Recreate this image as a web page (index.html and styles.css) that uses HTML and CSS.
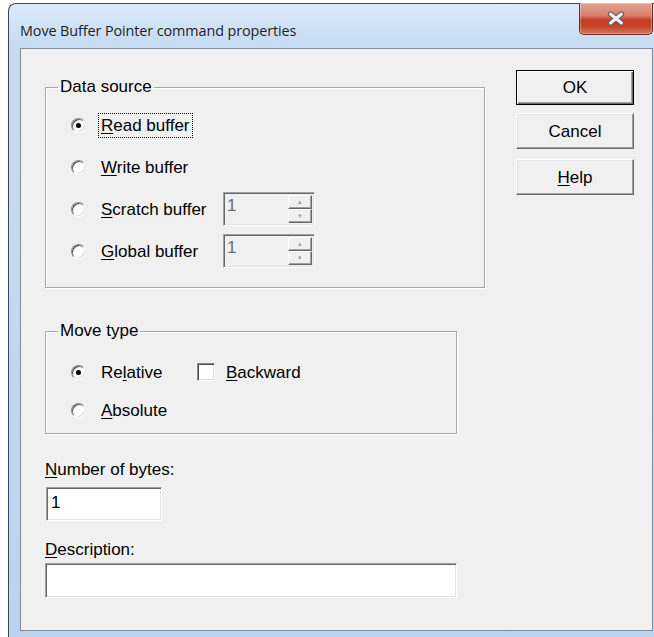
FILE: index.html
```html
<!DOCTYPE html>
<html lang="en">
<head>
<meta charset="utf-8">
<title>Move Buffer Pointer command properties</title>
<link rel="stylesheet" href="styles.css">
</head>
<body>
<div class="window">
  <div class="titlebar">
    <span class="title">Move Buffer Pointer command properties</span>
    <button class="close" type="button" aria-label="Close">
      <svg width="20" height="15" viewBox="0 0 20 15">
        <path d="M4.5 3 L15.5 12 M15.5 3 L4.5 12" stroke="#5a5a5a" stroke-width="5.2" stroke-linecap="round"/>
        <path d="M4.5 3 L15.5 12 M15.5 3 L4.5 12" stroke="#f4f4f4" stroke-width="3" stroke-linecap="round"/>
      </svg>
    </button>
  </div>
  <div class="client">
    <div class="main">
      <fieldset class="group group-source">
        <legend>Data source</legend>
        <div class="row"><span class="radio checked"></span><span class="label focus"><u>R</u>ead buffer</span></div>
        <div class="row"><span class="radio"></span><span class="label"><u>W</u>rite buffer</span></div>
        <div class="row"><span class="radio"></span><span class="label label-fixed"><u>S</u>cratch buffer</span>
          <div class="spin"><span class="spin-value">1</span><span class="spin-btns"><span class="spin-btn">&#9652;</span><span class="spin-btn">&#9662;</span></span></div>
        </div>
        <div class="row"><span class="radio"></span><span class="label label-fixed"><u>G</u>lobal buffer</span>
          <div class="spin"><span class="spin-value">1</span><span class="spin-btns"><span class="spin-btn">&#9652;</span><span class="spin-btn">&#9662;</span></span></div>
        </div>
      </fieldset>

      <fieldset class="group group-move">
        <legend>Move type</legend>
        <div class="row"><span class="radio checked"></span><span class="label label-rel">Re<u>l</u>ative</span><span class="check"></span><span class="label"><u>B</u>ackward</span></div>
        <div class="row"><span class="radio"></span><span class="label"><u>A</u>bsolute</span></div>
      </fieldset>

      <div class="field-label field-bytes"><u>N</u>umber of bytes:</div>
      <div class="edit edit-short">1</div>
      <div class="field-label field-desc"><u>D</u>escription:</div>
      <div class="edit edit-long"></div>
    </div>
    <div class="buttons">
      <button class="btn btn-default" type="button">OK</button>
      <button class="btn" type="button">Cancel</button>
      <button class="btn" type="button"><u>H</u>elp</button>
    </div>
  </div>
</div>
</body>
</html>
```
FILE: styles.css
```css
html, body {
  margin: 0;
  padding: 0;
  overflow: hidden;
  background: #ffffff;
}

body {
  width: 654px;
  height: 637px;
  font-family: "Liberation Sans", Arial, sans-serif;
  font-size: 17px;
  line-height: 19px;
  color: #000;
}

u { text-decoration-thickness: 1px; text-underline-offset: 2px; }

/* window frame */
.window {
  margin: 3px 0 0 8px;
  width: 660px;
  height: 660px;
  box-sizing: border-box;
  border: 1px solid #3c4550;
  border-right: none;
  border-radius: 8px 0 0 0;
  padding: 0 0 0 11px;
  background: linear-gradient(180deg, #dcebfa 0px, #c6dcf3 40px, #b9d3ef 100%);
}

.titlebar {
  display: flex;
  align-items: flex-start;
  height: 44px;
  width: 633px;
}

.title {
  font-family: "Open Sans", "Noto Sans", sans-serif;
  font-size: 14.4px;
  color: #1e1e1e;
  margin-top: 17px;
  letter-spacing: -0.1px;
}

.close {
  margin-left: auto;
  margin-top: -1px;
  width: 74px;
  height: 32px;
  border: 1px solid #6a2a22;
  border-top: none;
  border-radius: 0 0 5px 5px;
  background: linear-gradient(180deg, #e3a394 0%, #d8806b 40%, #c33c22 55%, #c6452b 75%, #d77658 100%);
  box-shadow: inset 0 0 0 1px rgba(255,255,255,0.3);
  display: flex;
  align-items: center;
  justify-content: center;
  padding: 0;
}

/* dialog client area */
.client {
  display: flex;
  width: 633px;
  height: 583px;
  box-sizing: border-box;
  border: 1px solid #7f8c99;
  background: #f0f0f0;
  padding: 21px 0 0 24px;
}

.main {
  width: 440px;
  margin-top: 8px;
}

.group {
  margin: 0;
  padding: 0 0 0 0;
  border: 1px solid #a6a6a6;
  box-shadow: 1px 1px 0 #ffffff, inset 1px 1px 0 #ffffff;
  min-inline-size: 0;
  box-sizing: border-box;
}

.group legend {
  margin-left: 12px;
  padding: 0 2px;
  line-height: 18px;
}

.group-source {
  width: 440px;
  height: 210px;
  padding-top: 8px;
}

.group-move {
  width: 412px;
  height: 112px;
  margin-top: 34px;
  padding-top: 13px;
}

.group-source .row { height: 42px; }
.group-move .row { height: 38px; }

.row {
  display: flex;
  align-items: center;
  padding-left: 25px;
}

/* radio button */
.radio {
  position: relative;
  width: 15px;
  height: 15px;
  box-sizing: border-box;
  border-radius: 50%;
  border: 1px solid;
  border-color: #8a8a8a #f4f4f4 #ffffff #8a8a8a;
  box-shadow: inset 1px 1px 0 #505050, inset -1px -1px 0 #dcdcdc;
  background: #ffffff;
  margin-right: 12px;
  flex: none;
}

.radio.checked::after {
  content: "";
  position: absolute;
  left: 4px;
  top: 4px;
  width: 5px;
  height: 5px;
  border-radius: 50%;
  background: #000;
}

.label { padding: 2px 2px; border: 1px solid transparent; }
.label.focus { border: 1px dotted #000; }
.label-fixed { width: 119px; }
.label-rel { width: 76px; }

/* check box */
.check {
  width: 18px;
  height: 18px;
  box-sizing: border-box;
  border: 1px solid;
  border-color: #8a8a8a #ffffff #ffffff #8a8a8a;
  box-shadow: inset 1px 1px 0 #505050, inset -1px -1px 0 #dcdcdc;
  background: #fff;
  margin-right: 8px;
  margin-left: 17px;
}

/* disabled spin box */
.spin {
  display: flex;
  width: 92px;
  height: 34px;
  box-sizing: border-box;
  border: 1px solid;
  border-color: #a0a0a0 #ffffff #ffffff #a0a0a0;
  box-shadow: inset 1px 1px 0 #696969, inset -1px -1px 0 #e3e3e3;
  background: #f0f0f0;
  padding: 2px 2px 2px 3px;
}

.spin-value {
  flex: 1;
  color: #6d6d6d;
  font-size: 17px;
  line-height: 22px;
}

.spin-btns {
  display: flex;
  flex-direction: column;
  width: 24px;
}

.spin-btn {
  flex: 1;
  box-sizing: border-box;
  border: 1px solid;
  border-color: #ffffff #696969 #696969 #ffffff;
  box-shadow: inset -1px -1px 0 #a0a0a0;
  background: #f0f0f0;
  color: #a0a0a0;
  font-size: 7px;
  line-height: 12px;
  text-align: center;
}

/* edit fields */
.field-label { line-height: 18px; }
.field-bytes { margin-top: 27px; }
.field-desc { margin-top: 20px; }

.edit {
  box-sizing: border-box;
  background: #ffffff;
  border: 1px solid;
  border-color: #a0a0a0 #ffffff #ffffff #a0a0a0;
  box-shadow: inset 1px 1px 0 #696969, inset -1px -1px 0 #e3e3e3;
  padding: 4px 4px 0 4px;
  line-height: 22px;
  font-size: 17px;
}

.edit-short { width: 116px; height: 34px; margin: 8px 0 0 1px; }
.edit-long { width: 412px; height: 35px; margin-top: 4px; }

/* command buttons */
.buttons {
  display: flex;
  flex-direction: column;
  margin-left: 31px;
}

.btn {
  font: inherit;
  width: 118px;
  height: 36px;
  box-sizing: border-box;
  margin-bottom: 10px;
  background: #f0f0f0;
  border: 1px solid;
  border-color: #ffffff #696969 #696969 #ffffff;
  box-shadow: inset -1px -1px 0 #a0a0a0, inset 1px 1px 0 #e3e3e3;
  color: #000;
  padding: 0;
}

.btn-default {
  height: 35px;
  border: 1px solid #000;
  box-shadow: inset 1px 1px 0 #ffffff, inset -1px -1px 0 #696969, inset -2px -2px 0 #a0a0a0;
  margin-bottom: 8px;
}
```
